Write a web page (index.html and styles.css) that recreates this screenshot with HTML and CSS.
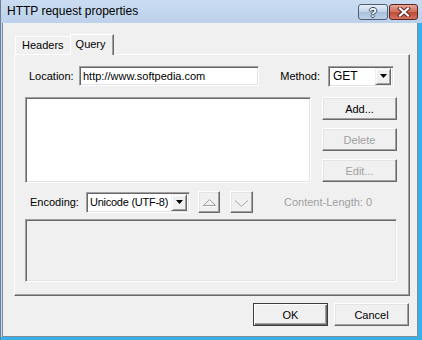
FILE: index.html
```html
<html lang="en">
    <head>
        <title>HTTP request properties</title>
        <link rel="stylesheet" href="styles.css">
    </head>
    <body>
        <div class="window">
            <div class="titlebar">
                <span class="title">HTTP request properties</span>
                <div class="caption-btns">
                    <div class="cap-btn help">?</div>
                    <div class="cap-btn close">
                        <svg width="14" height="10" viewBox="0 0 14 10">
                            <path d="M3 1.5 L11 8.5 M11 1.5 L3 8.5" stroke="#5a2020" stroke-width="4" stroke-linecap="square"/>
                            <path d="M3 1.5 L11 8.5 M11 1.5 L3 8.5" stroke="#ffffff" stroke-width="2.2" stroke-linecap="square"/>
                        </svg>
                    </div>
                </div>
            </div>
            <div class="frame">
                <div class="client">
                    <div class="tabs">
                        <div class="tab">Headers</div>
                        <div class="tab active">Query</div>
                    </div>
                    <div class="panel">
                        <div class="row loc-row">
                            <span class="lbl loc-lbl">Location:</span>
                            <div class="edit loc-edit">http://www.softpedia.com</div>
                            <span class="lbl method-lbl">Method:</span>
                            <div class="edit combo method">
                                <span class="combo-text">GET</span>
                                <div class="combo-btn">
                                    <svg width="7" height="4" viewBox="0 0 7 4"><path d="M0 0 H7 L3.5 4 Z" fill="#000"/></svg>
                                </div>
                            </div>
                        </div>
                        <div class="row list-row">
                            <div class="edit listbox"></div>
                            <div class="btn-col">
                                <div class="btn">Add...</div>
                                <div class="btn disabled">Delete</div>
                                <div class="btn disabled">Edit...</div>
                            </div>
                        </div>
                        <div class="row enc-row">
                            <span class="lbl enc-lbl">Encoding:</span>
                            <div class="edit combo encoding">
                                <span class="combo-text">Unicode (UTF-8)</span>
                                <div class="combo-btn">
                                    <svg width="7" height="4" viewBox="0 0 7 4"><path d="M0 0 H7 L3.5 4 Z" fill="#000"/></svg>
                                </div>
                            </div>
                            <div class="btn arrow-btn up">
                                <svg width="20" height="20" viewBox="0 0 20 20">
                                    <path d="M4.5 14.5 H16.5" stroke="#ffffff" stroke-width="1"/>
                                    <path d="M4.5 13.5 L10.5 7.5 L16.5 13.5 Z" fill="none" stroke="#a0a0a0" stroke-width="1"/>
                                </svg>
                            </div>
                            <div class="btn arrow-btn down">
                                <svg width="21" height="20" viewBox="0 0 21 20">
                                    <path d="M4 8.5 L10.5 14.5 L17 8.5" fill="none" stroke="#ffffff" stroke-width="1" transform="translate(0.6 0.6)"/>
                                    <path d="M4 8.5 L10.5 14.5 L17 8.5" fill="none" stroke="#a0a0a0" stroke-width="1"/>
                                </svg>
                            </div>
                            <span class="lbl content-len">Content-Length: 0</span>
                        </div>
                        <div class="edit body-box"></div>
                    </div>
                    <div class="footer">
                        <div class="btn default">OK</div>
                        <div class="btn">Cancel</div>
                    </div>
                </div>
            </div>
        </div>
    </body>
</html>
```

FILE: styles.css
```css
body {
    margin: 0;
    font-family: "Liberation Sans", Arial, sans-serif;
    font-size: 11px;
    color: #000;
}

.window {
    width: 422px;
    height: 340px;
    display: flex;
    flex-direction: column;
    background: #c2d6ed;
    box-sizing: border-box;
    border-left: 1px solid #6d7f95;
}

/* title bar */
.titlebar {
    height: 23px;
    flex: none;
    display: flex;
    align-items: center;
    padding-left: 6px;
    background: linear-gradient(#c9dcf1, #bcd1ea);
}
.title {
    font-size: 12px;
    margin-top: -2px;
}
.caption-btns {
    margin-left: auto;
    margin-right: 4px;
    display: flex;
    gap: 1px;
    align-self: flex-start;
    margin-top: 4px;
}
.cap-btn {
    height: 14px;
    border: 1px solid #4d5e73;
    border-radius: 3px;
    display: flex;
    align-items: center;
    justify-content: center;
}
.help {
    width: 28px;
    background: linear-gradient(#e6eef8, #c1d3e9 50%, #a9c0dc 51%, #bcd0e8);
    color: #fff;
    font-weight: bold;
    font-size: 13px;
    text-shadow: 1px 0 0 #33465c, -1px 0 0 #33465c, 0 1px 0 #33465c, 0 -1px 0 #33465c;
}
.close {
    width: 27px;
    border-color: #5b2424;
    background: linear-gradient(#e8a593, #cf6d5b 50%, #c24a35 51%, #d4735e);
}

/* window frame */
.frame {
    flex: 1;
    display: flex;
    padding-left: 1px;
    border-right: 4px solid #35b0e8;
    border-bottom: 3px solid #35b0e8;
}
.client {
    flex: 1;
    background: #f0f0f0;
    border: 1px solid #7f8c99;
    border-top: none;
    display: flex;
    flex-direction: column;
    padding: 11px 7px 0 11px;
}

/* tabs */
.tabs {
    display: flex;
    align-items: flex-end;
    height: 20px;
    padding-left: 1px;
    position: relative;
    z-index: 1;
}
.tab {
    line-height: 17px;
    padding: 0 6px 0 6px;
    background: #f0f0f0;
    border-top: 1px solid #fff;
    border-left: 1px solid #fff;
    box-sizing: border-box;
    height: 18px;
}
.tab.active {
    height: 21px;
    line-height: 19px;
    margin-bottom: -1px;
    padding: 0 7px 0 5px;
    border-right: 1px solid #696969;
    box-shadow: inset -1px 0 0 #a0a0a0;
}

.panel {
    width: 396px;
    height: 242px;
    box-sizing: border-box;
    border: 1px solid;
    border-color: #fff #696969 #696969 #fff;
    box-shadow: inset -1px -1px 0 #a0a0a0;
    padding: 11px 11px 0 10px;
}

.row {
    display: flex;
    align-items: center;
}

.lbl {
    white-space: nowrap;
}

/* sunken edit boxes */
.edit {
    background: #fff;
    box-sizing: border-box;
    border: 1px solid;
    border-color: #a0a0a0 #fff #fff #a0a0a0;
    box-shadow: inset 1px 1px 0 #696969, inset -1px -1px 0 #e3e3e3;
}

.loc-row {
    height: 20px;
}
.loc-lbl {
    width: 54px;
    padding-left: 4px;
    box-sizing: border-box;
}
.loc-edit {
    width: 180px;
    height: 20px;
    line-height: 18px;
    padding-left: 3px;
}
.method-lbl {
    width: 69px;
    text-align: right;
    padding-right: 8px;
    box-sizing: border-box;
}

.combo {
    height: 21px;
    display: flex;
    align-items: center;
    padding: 2px;
}
.combo-text {
    flex: 1;
    padding-left: 2px;
    white-space: nowrap;
    overflow: hidden;
}
.method {
    width: 66px;
}
.method .combo-text {
    font-size: 12px;
}
.combo-btn {
    flex: none;
    width: 16px;
    height: 17px;
    box-sizing: border-box;
    background: #f0f0f0;
    border: 1px solid;
    border-color: #f0f0f0 #696969 #696969 #f0f0f0;
    box-shadow: inset 1px 1px 0 #fff, inset -1px -1px 0 #a0a0a0;
    display: flex;
    align-items: center;
    justify-content: center;
}

.list-row {
    margin-top: 11px;
    align-items: flex-start;
}
.listbox {
    width: 286px;
    height: 86px;
}
.btn-col {
    margin-left: 11px;
    display: flex;
    flex-direction: column;
    gap: 8px;
}

/* raised buttons */
.btn {
    width: 75px;
    height: 23px;
    box-sizing: border-box;
    background: #f0f0f0;
    border: 1px solid;
    border-color: #fff #696969 #696969 #fff;
    box-shadow: inset -1px -1px 0 #a0a0a0, inset 1px 1px 0 #e3e3e3;
    display: flex;
    align-items: center;
    justify-content: center;
}
.btn.disabled {
    color: #a0a0a0;
}
.btn.default {
    border-color: #3c3c3c;
    box-shadow: inset 1px 1px 0 #fff, inset -1px -1px 0 #696969, inset -2px -2px 0 #a0a0a0;
}

.enc-row {
    margin-top: 8px;
    height: 22px;
}
.enc-lbl {
    width: 61px;
    padding-left: 5px;
    box-sizing: border-box;
}
.encoding {
    width: 104px;
}
.encoding .combo-text {
    padding-left: 1px;
    letter-spacing: -0.25px;
}
.arrow-btn {
    width: 22px;
    height: 22px;
    margin-left: 8px;
}
.arrow-btn.down {
    width: 23px;
    margin-left: 10px;
}
.content-len {
    color: #a0a0a0;
    margin-left: 31px;
}

.body-box {
    margin-top: 6px;
    width: 372px;
    height: 63px;
    background: #f0f0f0;
}

.footer {
    display: flex;
    justify-content: flex-end;
    gap: 6px;
    margin-top: 7px;
    padding-right: 1px;
}
```
